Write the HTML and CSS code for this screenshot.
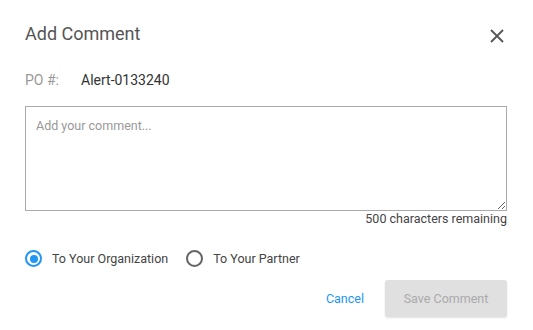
FILE: index.html
```html
<!DOCTYPE html>
<html lang="en">
  <head>
    <meta charset="UTF-8" />
    <meta name="viewport" content="width=device-width, initial-scale=1.0" />
    <title>Add Comment</title>
    <link rel="stylesheet" href="styles.css">
  </head>
  <body>
    <div class="dialog">
      <div class="dialog-header">
        <h1>Add Comment</h1>
        <button class="close-btn" aria-label="Close">
          <svg width="14" height="14" viewBox="0 0 14 14">
            <path d="M1 1L13 13M13 1L1 13" stroke="#555" stroke-width="1.8" fill="none" />
          </svg>
        </button>
      </div>

      <div class="po-row">
        <span class="po-label">PO #:</span>
        <span class="po-value">Alert-0133240</span>
      </div>

      <textarea class="comment-box" placeholder="Add your comment..." maxlength="500"></textarea>
      <div class="counter">500 characters remaining</div>

      <div class="audience">
        <label class="radio">
          <input type="radio" name="audience" checked />
          <span class="dot"></span>
          To Your Organization
        </label>
        <label class="radio">
          <input type="radio" name="audience" />
          <span class="dot"></span>
          To Your Partner
        </label>
      </div>

      <div class="actions">
        <a href="#" class="cancel">Cancel</a>
        <button class="save-btn" disabled>Save Comment</button>
      </div>
    </div>
  </body>
</html>
```

FILE: styles.css
```css
body {
  margin: 0;
  background: #fff;
  font-family: Roboto, "Noto Sans", sans-serif;
  color: #333;
}

.dialog {
  width: 533px;
  height: 330px;
  box-sizing: border-box;
  padding: 22px 26px 0 25px;
}

.dialog-header {
  display: flex;
  justify-content: space-between;
  align-items: center;
  height: 24px;
}

h1 {
  margin: 0;
  font-size: 18px;
  font-weight: 400;
  color: #555;
  line-height: 24px;
}

.close-btn {
  border: none;
  background: none;
  padding: 0;
  margin-top: 4px;
  margin-right: 3px;
  width: 14px;
  height: 14px;
  cursor: pointer;
}

.close-btn svg {
  display: block;
}

.po-row {
  display: flex;
  margin-top: 24px;
  font-size: 14px;
  line-height: 20px;
}

.po-label {
  width: 56px;
  color: #999;
}

.po-value {
  color: #333;
}

.comment-box {
  display: block;
  width: 482px;
  height: 105px;
  box-sizing: border-box;
  margin-top: 16px;
  padding: 11px 10px;
  border: 1px solid #aaa;
  border-radius: 0;
  font-family: Roboto, "Noto Sans", sans-serif;
  font-size: 12.5px;
  color: #333;
  outline: none;
}

.comment-box::placeholder {
  color: #999;
}

.counter {
  width: 482px;
  text-align: right;
  font-size: 12.5px;
  line-height: 16px;
  color: #444;
}

.audience {
  display: flex;
  gap: 18px;
  margin-top: 23px;
}

.radio {
  display: flex;
  align-items: center;
  font-size: 12.5px;
  color: #444;
  cursor: pointer;
}

.radio input {
  display: none;
}

.dot {
  width: 17px;
  height: 17px;
  box-sizing: border-box;
  border: 2px solid #666;
  border-radius: 50%;
  margin-right: 10px;
  position: relative;
}

.radio input:checked + .dot {
  border-color: #2196f3;
}

.radio input:checked + .dot::after {
  content: "";
  position: absolute;
  top: 2.5px;
  left: 2.5px;
  width: 8px;
  height: 8px;
  border-radius: 50%;
  background: #2196f3;
}

.actions {
  display: flex;
  justify-content: flex-end;
  align-items: center;
  width: 482px;
  margin-top: 13px;
  gap: 21px;
}

.cancel {
  color: #2196f3;
  text-decoration: none;
  font-size: 12.5px;
}

.save-btn {
  width: 122px;
  height: 37px;
  border: none;
  border-radius: 3px;
  background: #e0e0e0;
  color: #aaa;
  font-family: Roboto, "Noto Sans", sans-serif;
  font-size: 12.5px;
  box-shadow: 0 1px 2px rgba(0, 0, 0, 0.12);
}
```
